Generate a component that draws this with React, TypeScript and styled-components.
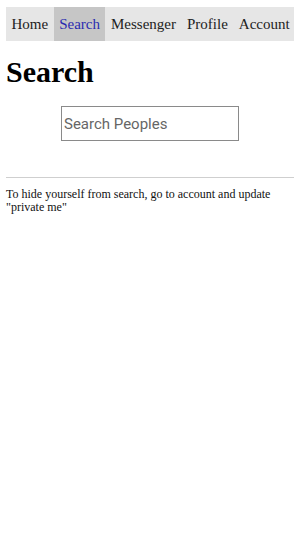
import { createGlobalStyle } from 'styled-components'
import styled from 'styled-components'

const GlobalStyle = createGlobalStyle`
  body {
    margin: 0;
    padding: 6px;
    font-family: 'Liberation Serif', serif;
    background: #fff;
    color: #000;
  }
`

const Nav = styled.nav`
  display: flex;
  align-items: stretch;
  margin-top: 1px;
  height: 34px;
  background-color: #e6e6e6;
`

const NavItem = styled.a<{ $active?: boolean }>`
  display: flex;
  align-items: center;
  padding: 0 5.5px;
  font-size: 15px;
  color: ${(p) => (p.$active ? '#2b2bb0' : '#222')};
  background-color: ${(p) => (p.$active ? '#c6c6c6' : 'transparent')};
  text-decoration: none;
`

const Title = styled.h1`
  margin: 15px 0 18px;
  font-size: 30px;
  font-weight: bold;
  line-height: 32px;
`

const SearchRow = styled.div`
  display: flex;
  justify-content: center;
`

const SearchInput = styled.input`
  box-sizing: border-box;
  width: 178px;
  height: 35px;
  padding: 0 2px;
  border: 1px solid #8a8a8a;
  font-family: Roboto, sans-serif;
  font-size: 15px;
  outline: none;
  &::placeholder {
    color: #666;
  }
`

const Divider = styled.hr`
  margin: 36px 0 10px;
  border: none;
  border-top: 1px solid #cfcfcf;
`

const Note = styled.p`
  margin: 0;
  font-size: 12px;
  line-height: 13px;
  color: #111;
`

export default function App() {
  const links = ['Home', 'Search', 'Messenger', 'Profile', 'Account']
  return (
    <>
      <GlobalStyle />
      <Nav>
        {links.map((l) => (
          <NavItem key={l} href="#" $active={l === 'Search'}>
            {l}
          </NavItem>
        ))}
      </Nav>
      <Title>Search</Title>
      <SearchRow>
        <SearchInput placeholder="Search Peoples" />
      </SearchRow>
      <Divider />
      <Note>To hide yourself from search, go to account and update "private me"</Note>
    </>
  )
}
